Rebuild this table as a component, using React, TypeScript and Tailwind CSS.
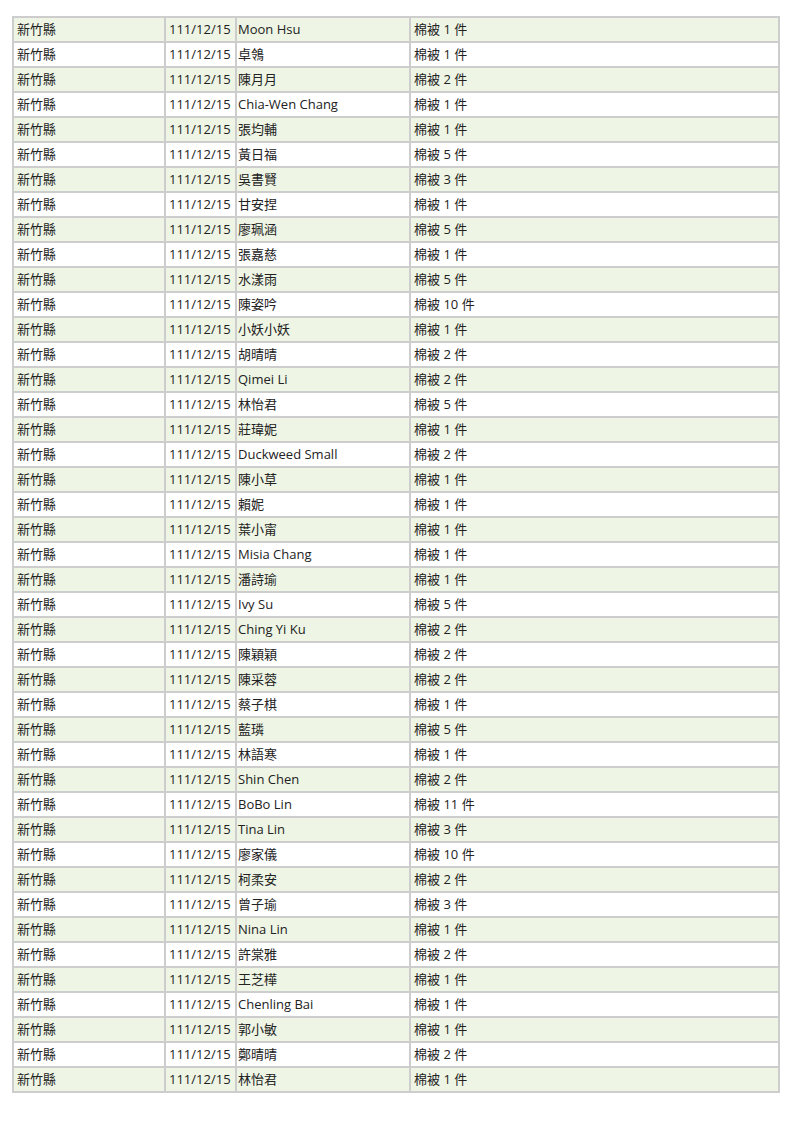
const rows: [string, number][] = [
  ['Moon Hsu', 1],
  ['卓鴒', 1],
  ['陳月月', 2],
  ['Chia-Wen Chang', 1],
  ['張均輔', 1],
  ['黃日福', 5],
  ['吳書賢', 3],
  ['甘安捏', 1],
  ['廖珮涵', 5],
  ['張嘉慈', 1],
  ['水漾雨', 5],
  ['陳姿吟', 10],
  ['小妖小妖', 1],
  ['胡晴晴', 2],
  ['Qimei Li', 2],
  ['林怡君', 5],
  ['莊瑋妮', 1],
  ['Duckweed Small', 2],
  ['陳小草', 1],
  ['賴妮', 1],
  ['葉小甯', 1],
  ['Misia Chang', 1],
  ['潘詩瑜', 1],
  ['Ivy Su', 5],
  ['Ching Yi Ku', 2],
  ['陳穎穎', 2],
  ['陳采蓉', 2],
  ['蔡子棋', 1],
  ['藍璘', 5],
  ['林語寒', 1],
  ['Shin Chen', 2],
  ['BoBo Lin', 11],
  ['Tina Lin', 3],
  ['廖家儀', 10],
  ['柯柔安', 2],
  ['曾子瑜', 3],
  ['Nina Lin', 1],
  ['許棠雅', 2],
  ['王芝樺', 1],
  ['Chenling Bai', 1],
  ['郭小敏', 1],
  ['鄭晴晴', 2],
  ['林怡君', 1],
];

export default function App() {
  return (
    <div className="min-h-[1123px] bg-white pt-[16px] pl-[12px] font-['Open_Sans','Noto_Sans_CJK_TC',sans-serif] text-[13px] text-[#222]">
      <table className="w-[766px] table-fixed border-collapse border-2 border-[#cdcdcd]">
        <colgroup>
          <col className="w-[152px]" />
          <col className="w-[71px]" />
          <col className="w-[174px]" />
          <col className="w-[369px]" />
        </colgroup>
        <tbody>
          {rows.map(([name, qty], i) => (
            <tr key={i} className={i % 2 === 0 ? 'h-[25px] bg-[#eef5e5]' : 'h-[25px] bg-white'}>
              <td className="border-2 border-[#cdcdcd] px-[3px] py-0 leading-[21px]">新竹縣</td>
              <td className="border-2 border-[#cdcdcd] px-[3px] py-0 leading-[21px] whitespace-nowrap">111/12/15</td>
              <td className="border-2 border-[#cdcdcd] px-[1px] py-0 leading-[21px]">{name}</td>
              <td className="border-2 border-[#cdcdcd] px-[3px] py-0 leading-[21px]">棉被 {qty} 件</td>
            </tr>
          ))}
        </tbody>
      </table>
    </div>
  );
}
